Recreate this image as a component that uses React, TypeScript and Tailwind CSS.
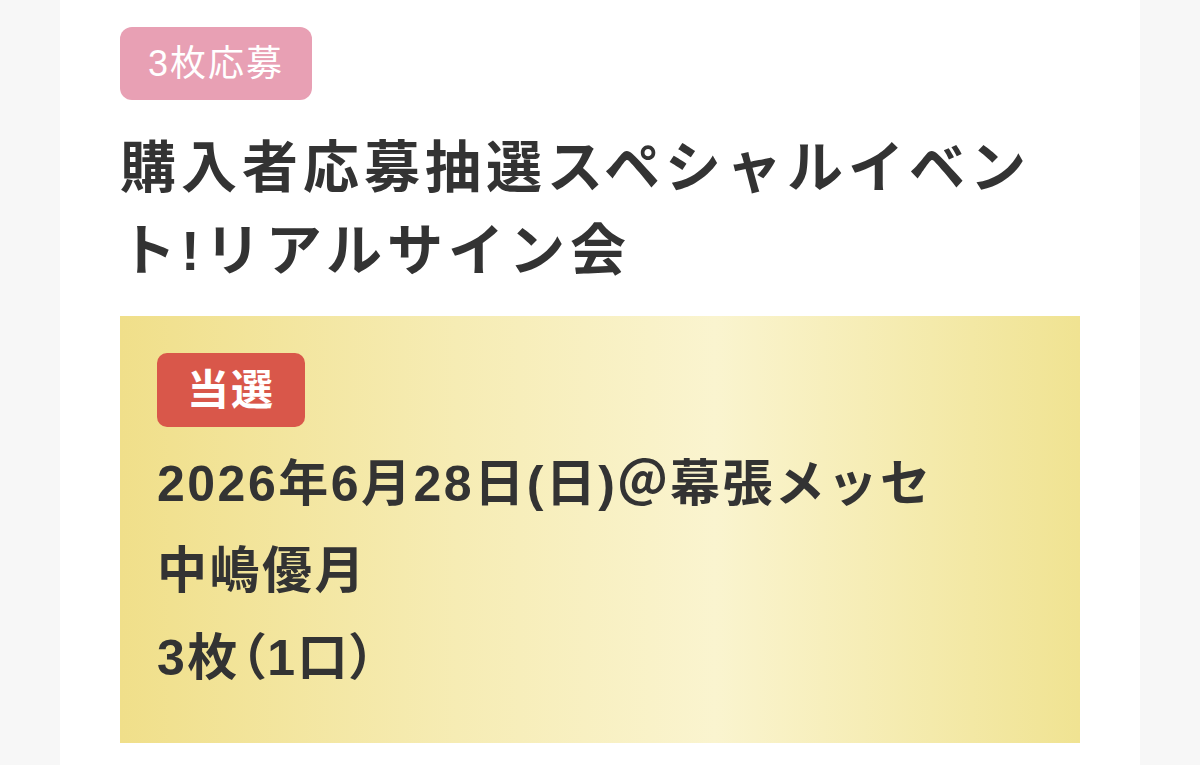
/**
 * App - 抽選結果カード
 */

const jp = '"Liberation Sans", "Noto Sans CJK JP", sans-serif'

export default function App() {
  return (
    <div className="min-h-[765px] bg-[#f7f7f7] text-[#333333]" style={{ fontFamily: jp }}>
      <div className="mx-[60px] min-h-[765px] bg-white px-[60px] pt-[27px] pb-[21px]">
        {/* Entry type */}
        <div className="flex h-[73px] w-[192px] items-center justify-center rounded-[12px] bg-[#e8a0b4] text-[36px] tracking-[2px] text-white">
          3枚応募
        </div>

        {/* Title */}
        <h1 className="mt-[26px] text-[56px] leading-[83px] font-bold tracking-[5px]">
          購入者応募抽選スペシャルイベント!リアルサイン会
        </h1>

        {/* Result */}
        <div className="mt-[24px] bg-[linear-gradient(to_right,#f0df8a,#f6ecb4_35%,#faf4cf_62%,#f0e392)] px-[37px] pt-[37px] pb-[41px]">
          <div className="flex h-[74px] w-[148px] items-center justify-center rounded-[10px] bg-[#d9574a] text-[42px] font-bold tracking-[2px] text-white">
            当選
          </div>
          <div className="mt-[14px] text-[50px] leading-[87px] font-bold tracking-[2.5px]">
            <p>2026年6月28日(日)＠幕張メッセ</p>
            <p>中嶋優月</p>
            <p className="[font-feature-settings:'palt']">3枚（1口）</p>
          </div>
        </div>
      </div>
    </div>
  )
}
